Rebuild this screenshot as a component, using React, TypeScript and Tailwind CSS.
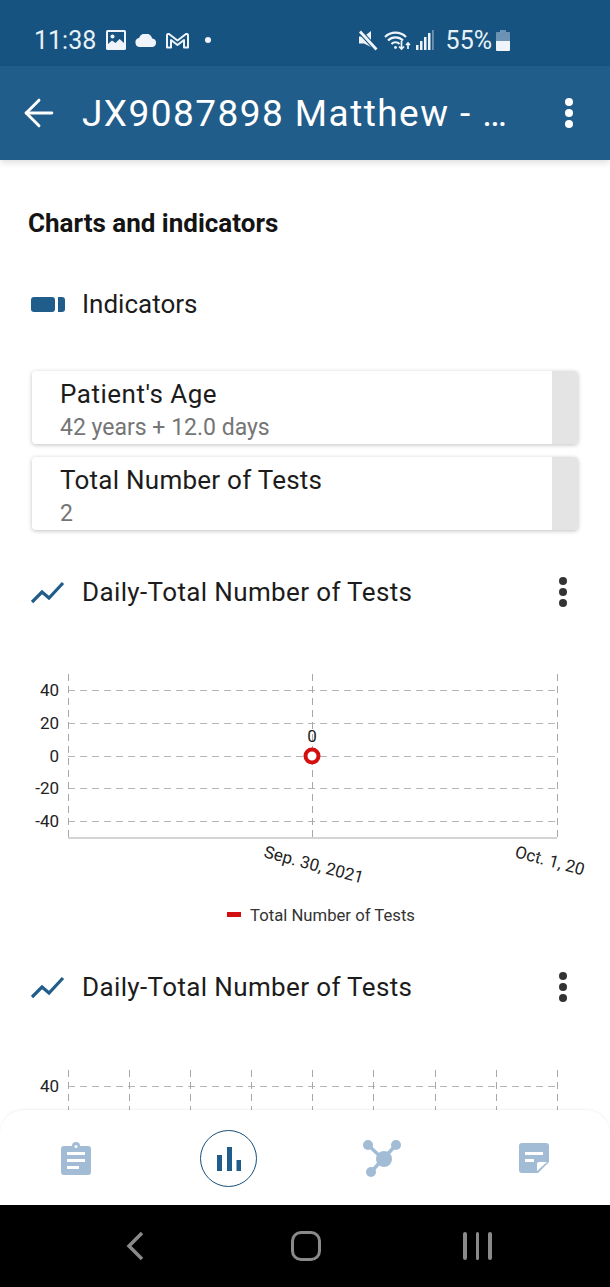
import { ArrowLeft } from "lucide-react";

const roboto = { fontFamily: "Roboto, sans-serif" };

const Dots = ({ className }: { className: string }) => (
  <div className={`flex flex-col items-center ${className}`}>
    <span className="size-[8px] rounded-full bg-current" />
    <span className="size-[8px] rounded-full bg-current" />
    <span className="size-[8px] rounded-full bg-current" />
  </div>
);

const StatusLeft = () => (
  <div className="flex items-center">
    <span className="w-[106px] pl-[34px] text-[25px] leading-none whitespace-nowrap text-[#e8f1f7]">11:38</span>
    <svg width="20" height="20" viewBox="0 0 20 20">
      <rect width="20" height="20" rx="1.5" fill="#eef4f9" />
      <rect x="2" y="2" width="16" height="16" fill="#175380" />
      <circle cx="6.5" cy="6.5" r="2" fill="#eef4f9" />
      <path d="M2 18v-4l4-3.500 3.500 2.500 4-4 4.500 4v5z" fill="#eef4f9" />
    </svg>
    <svg width="22" height="13" viewBox="0 0 22 13" className="ml-[9px]">
      <path d="M5 13a4.500 4.500 0 0 1-1-8.900 7 7 0 0 1 13.300.4A4.300 4.300 0 0 1 17.500 13z" fill="#eef4f9" />
    </svg>
    <svg width="23" height="17" viewBox="0 0 23 17" className="ml-[9px]">
      <path d="M1 15.500V3.500q0-2 2-1.500l8.500 6.500L20 2q2-.5 2 1.500v12h-4V8l-6.500 5L5 8v7.500z" fill="none" stroke="#eef4f9" strokeWidth="2" strokeLinejoin="round" />
    </svg>
    <span className="ml-[16px] size-[6px] rounded-full bg-[#eef4f9]" />
  </div>
);

const StatusRight = () => (
  <div className="flex items-center">
    <svg width="20" height="21" viewBox="0 0 20 21">
      <path d="M1 6.500h5L13 1v16L6 13.500H1z" fill="#eef4f9" />
      <path d="M2 1.500l16.500 18" stroke="#175380" strokeWidth="5" />
      <path d="M2 1.500l16.500 18" stroke="#eef4f9" strokeWidth="2.800" />
    </svg>
    <svg width="27" height="22" viewBox="0 0 27 22" className="ml-[6px]" fill="none" stroke="#eef4f9" strokeWidth="2.200">
      <path d="M1 8a15 15 0 0 1 21 0M4 11.500a10.500 10.500 0 0 1 15 0M7.500 15a5.500 5.500 0 0 1 8 0" />
      <circle cx="11.500" cy="18.500" r="1.400" fill="#eef4f9" stroke="none" />
      <path d="M17.500 12v8m-2.500-2.500l2.500 2.500 2.500-2.500M24 20v-6m-2 2l2-2 2 2" strokeWidth="1.700" />
    </svg>
    <svg width="18" height="20" viewBox="0 0 18 20" className="ml-[5px]">
      <rect x="0" y="15" width="2.500" height="5" fill="#eef4f9" />
      <rect x="4" y="11" width="2.500" height="9" fill="#eef4f9" />
      <rect x="8" y="7" width="2.500" height="13" fill="#eef4f9" />
      <rect x="12" y="3" width="2.500" height="17" fill="#eef4f9" />
      <rect x="16" y="0" width="1.800" height="20" fill="#6d93b4" />
    </svg>
    <span className="ml-[12px] text-[25px] leading-none text-[#e8f1f7]">55%</span>
    <svg width="14" height="21" viewBox="0 0 14 21" className="ml-[4px]">
      <path d="M4 0h6v2h3a1 1 0 0 1 1 1v8H0V3a1 1 0 0 1 1-1h3z" fill="#6d93b4" />
      <path d="M0 11h14v9a1 1 0 0 1-1 1H1a1 1 0 0 1-1-1z" fill="#eef4f9" />
    </svg>
  </div>
);

const IndicatorCard = ({ title, value, titleClass }: { title: string; value: string; titleClass: string }) => (
  <div className="flex h-[73px] overflow-hidden rounded-[4px] bg-white shadow-[0_1px_4px_rgba(0,0,0,0.25)]">
    <div className="flex-1 pl-[28px] pt-[7px]">
      <div className={`text-[26px] leading-[33px] text-[#1c1c1c] ${titleClass}`}>{title}</div>
      <div className="mt-[2px] text-[23px] leading-[30px] text-[#757575]">{value}</div>
    </div>
    <div className="w-[26px] bg-[#e4e4e4]" />
  </div>
);

const SectionRow = ({ title }: { title: string }) => (
  <div className="flex h-[48px] items-center pl-[31px] pr-[43px]">
    <svg width="34" height="24" viewBox="0 0 34 24" fill="none" stroke="#215d8a" strokeWidth="3.200">
      <path d="M1 22l10-10 7 6L32 3" />
    </svg>
    <span className="ml-[17px] flex-1 text-[26px] tracking-[0.37px] text-[#1c1c1c]">{title}</span>
    <Dots className="gap-[3px] text-[#333333]" />
  </div>
);

const gridYs = [30, 63, 96, 128, 161];
const yLabels = ["40", "20", "0", "-20", "-40"];

// rows = how many grid rows are visible above the bottom nav
const Chart = ({ xs, full, rows }: { xs: number[]; full: boolean; rows: number }) => (
  <svg width="610" height="270" viewBox="0 0 610 270" className="block shrink-0" style={roboto}>
    {gridYs.slice(0, rows).map((y, i) => (
      <g key={y}>
        <line x1="68" x2="557" y1={y + 0.5} y2={y + 0.5} stroke="#b5b5b5" strokeDasharray="7 5" />
        <text x="59" y={y + 6} textAnchor="end" fontSize="17" fill="#222222">{yLabels[i]}</text>
      </g>
    ))}
    {xs.map((x) => (
      <line key={x} x1={x + 0.5} x2={x + 0.5} y1="14" y2="178" stroke="#a8a8a8" strokeDasharray="7 5" />
    ))}
    {full && (
      <>
        <line x1="68" x2="557" y1="178" y2="178" stroke="#d4d4d4" strokeWidth="2" />
        <text x="312" y="82" textAnchor="middle" fontSize="17" fill="#222222">0</text>
        <circle cx="312" cy="96" r="6.500" fill="white" stroke="#d3100f" strokeWidth="4" />
        <text transform="translate(263 197) rotate(15)" fontSize="17" fill="#222222">Sep. 30, 2021</text>
        <text transform="translate(514 197) rotate(15)" fontSize="17" fill="#222222">Oct. 1, 20</text>
        <rect x="227" y="252" width="14" height="5" fill="#d3100f" />
        <text x="250" y="261" fontSize="16.700" fill="#333333">Total Number of Tests</text>
      </>
    )}
  </svg>
);

const iconBlue = "#a1bcd4";

const BottomNav = () => (
  <div className="absolute inset-x-0 bottom-0 grid h-[95px] grid-cols-[76px_76px_196px_1fr] rounded-t-[24px] bg-white shadow-[0_-1px_2px_rgba(0,0,0,0.06)]">
    <svg width="30" height="33" viewBox="0 0 30 33" className="ml-[61px] mt-[32px]">
      <path d="M3 4h8a4 4 0 0 1 8 0h8a3 3 0 0 1 3 3v23a3 3 0 0 1-3 3H3a3 3 0 0 1-3-3V7a3 3 0 0 1 3-3z" fill={iconBlue} />
      <circle cx="15" cy="4.500" r="1.500" fill="white" />
      <rect x="6" y="10" width="18" height="3" fill="white" />
      <rect x="6" y="17" width="18" height="3" fill="white" />
      <rect x="6" y="24" width="12" height="3" fill="white" />
    </svg>
    <div className="ml-[124px] mt-[20px] flex size-[57px] items-center justify-center rounded-full border-[1.500px] border-[#174f7b]">
      <svg width="24" height="24" viewBox="0 0 24 24" fill="#215d8a">
        <rect x="0" y="8" width="5" height="16" />
        <rect x="10" y="0" width="5" height="24" />
        <rect x="19.500" y="13" width="4.500" height="11" />
      </svg>
    </div>
    <svg width="38" height="38" viewBox="0 0 38 38" className="ml-[211px] mt-[30px]">
      <path d="M5 5l15 14M33 5L20 19M8 32l12-13" stroke={iconBlue} strokeWidth="3.500" />
      <circle cx="21" cy="19" r="8" fill={iconBlue} />
      <circle cx="5" cy="5" r="5" fill={iconBlue} />
      <circle cx="33" cy="5" r="5" fill={iconBlue} />
      <circle cx="8" cy="32" r="5" fill={iconBlue} />
    </svg>
    <svg width="30" height="30" viewBox="0 0 30 30" className="ml-[171px] mt-[33px]">
      <path d="M3 0h24a3 3 0 0 1 3 3v16L19 30H3a3 3 0 0 1-3-3V3a3 3 0 0 1 3-3z" fill={iconBlue} />
      <rect x="6" y="9" width="18" height="3" fill="white" />
      <rect x="6" y="16" width="9" height="3" fill="white" />
      <path d="M18 28v-7a2 2 0 0 1 2-2h8z" fill="white" />
    </svg>
  </div>
);

const AndroidNav = () => (
  <div className="flex h-[82px] shrink-0 items-center bg-black">
    <svg width="18" height="30" viewBox="0 0 18 30" className="ml-[126px]" fill="none" stroke="#8a8a8a" strokeWidth="3.500">
      <path d="M16 2L3 15l13 13" />
    </svg>
    <div className="ml-[147px] size-[30px] rounded-[10px] border-[3.500px] border-[#8a8a8a]" />
    <div className="ml-[142px] flex gap-[9px]">
      <span className="h-[28px] w-[3.500px] rounded-full bg-[#8a8a8a]" />
      <span className="h-[28px] w-[3.500px] rounded-full bg-[#8a8a8a]" />
      <span className="h-[28px] w-[3.500px] rounded-full bg-[#8a8a8a]" />
    </div>
  </div>
);

export default function App() {
  return (
    <div className="flex h-[1287px] w-[610px] flex-col overflow-hidden bg-white" style={roboto}>
      <div className="flex h-[66px] shrink-0 items-center justify-between bg-[#175380] pr-[100px] pt-[14px]">
        <StatusLeft />
        <StatusRight />
      </div>
      <div className="z-10 flex h-[94px] shrink-0 items-center bg-[#215d8a] pl-[17px] pr-[37px] shadow-[0_3px_6px_rgba(0,0,0,0.12)]">
        <ArrowLeft size={44} strokeWidth={1.6} color="#ffffff" />
        <span className="ml-[21px] flex-1 whitespace-nowrap pt-[2px] text-[37px] tracking-[1.45px] text-white">JX9087898 Matthew - …</span>
        <Dots className="gap-[3px] text-white" />
      </div>

      <div className="relative flex-1 overflow-hidden">
        <div className="pl-[28px] pt-[47px] text-[26px] font-bold leading-[32px] text-[#141414]">Charts and indicators</div>

        <div className="mt-[41px] flex h-[48px] items-center pl-[31px]">
          <span className="h-[15px] w-[24px] rounded-[3px] bg-[#215d8a]" />
          <span className="ml-[3px] h-[15px] w-[7px] rounded-r-[3px] bg-[#215d8a]" />
          <span className="ml-[17px] text-[26px] text-[#1c1c1c]">Indicators</span>
        </div>

        <div className="mt-[43px] flex flex-col gap-[13px] pl-[32px] pr-[32px]">
          <IndicatorCard title="Patient's Age" value="42 years + 12.0 days" titleClass="tracking-[0.5px]" />
          <IndicatorCard title="Total Number of Tests" value="2" titleClass="tracking-[0.25px]" />
        </div>

        <div className="mt-[38px]">
          <SectionRow title="Daily-Total Number of Tests" />
        </div>
        <div className="mt-[44px]">
          <Chart xs={[68, 312, 557]} full rows={5} />
        </div>
        <div className="mt-[33px]">
          <SectionRow title="Daily-Total Number of Tests" />
        </div>
        <div className="mt-[45px]">
          <Chart xs={[68, 129, 190, 251, 312, 373, 435, 496, 557]} full={false} rows={1} />
        </div>

        <BottomNav />
      </div>
      <AndroidNav />
    </div>
  );
}
